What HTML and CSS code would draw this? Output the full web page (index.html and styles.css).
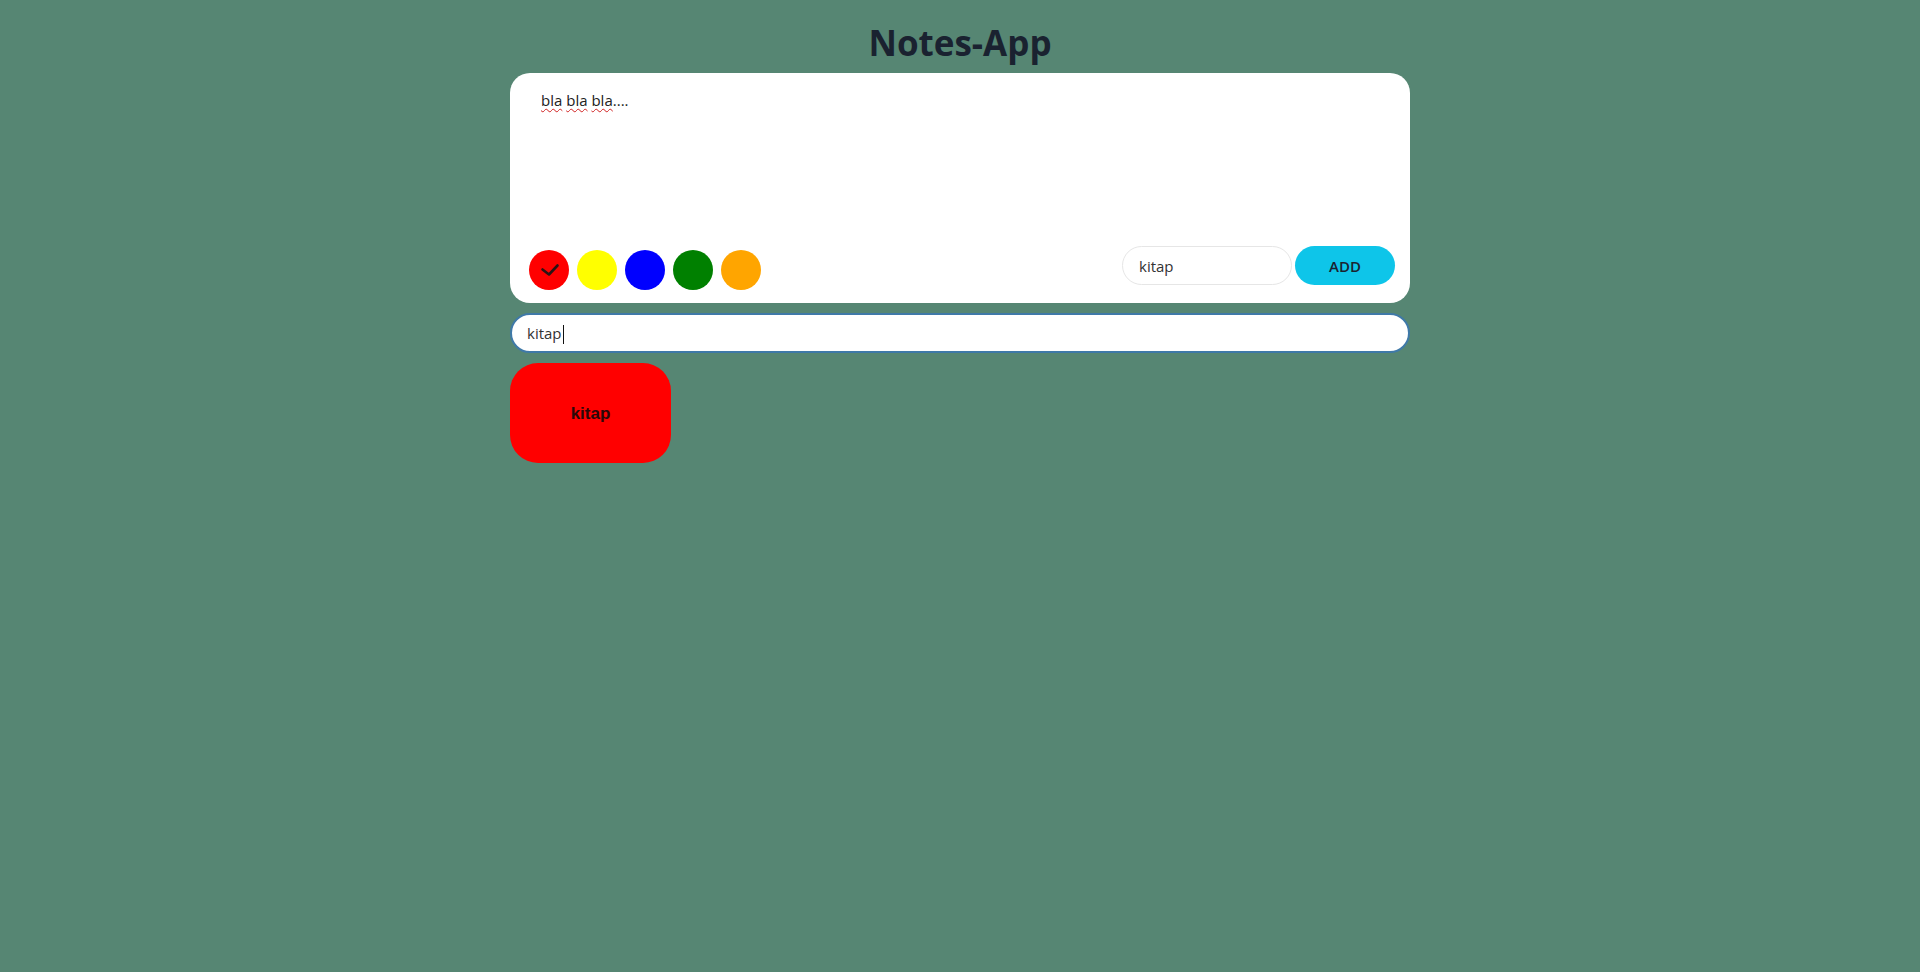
FILE: index.html
```html
<!DOCTYPE html>
<html lang="en">
<head>
<meta charset="utf-8">
<title>Notes-App</title>
<link rel="stylesheet" href="styles.css">
</head>
<body>
<div class="app">
  <h1 class="title">Notes-App</h1>
  <section class="editor">
    <div class="note-text"><span class="sp">bla</span> <span class="sp">bla</span> <span class="sp">bla</span>....</div>
    <div class="editor-bar">
      <div class="colors">
        <button class="swatch red" aria-label="red">
          <svg viewBox="0 0 40 40" width="40" height="40"><polyline points="13.5,19.5 20,24.5 28.5,15.5" fill="none" stroke="#2a1414" stroke-width="2.6" stroke-linecap="round" stroke-linejoin="round"/></svg>
        </button>
        <button class="swatch yellow" aria-label="yellow"></button>
        <button class="swatch blue" aria-label="blue"></button>
        <button class="swatch green" aria-label="green"></button>
        <button class="swatch orange" aria-label="orange"></button>
      </div>
      <div class="actions">
        <input class="title-input" type="text" value="kitap">
        <button class="add-btn">ADD</button>
      </div>
    </div>
  </section>
  <div class="search"><span class="search-text">kitap</span><span class="caret"></span></div>
  <div class="notes">
    <div class="note red">kitap</div>
  </div>
</div>
</body>
</html>
```
FILE: styles.css
```css
html, body {
  margin: 0;
  padding: 0;
  background: #568673;
  height: 100%;
}
body {
  font-family: "Open Sans", "Noto Sans", sans-serif;
}
.app {
  width: 900px;
  margin: 0 auto;
  padding-top: 21px;
}
.title {
  margin: 0 0 8px;
  text-align: center;
  font-size: 35px;
  line-height: 44px;
  font-weight: 700;
  color: #1a2230;
}
.editor {
  background: #fff;
  border-radius: 20px;
  padding: 10px 15px 13px 19px;
}
.note-text {
  height: 163px;
  box-sizing: border-box;
  padding: 8px 12px;
  font-size: 15px;
  line-height: 19px;
  color: #222;
}
.sp {
  text-decoration: underline wavy #d02020;
  text-decoration-thickness: 1px;
  text-underline-offset: 2px;
}
.editor-bar {
  display: flex;
  justify-content: space-between;
  align-items: flex-start;
  height: 44px;
}
.colors {
  display: flex;
  gap: 8px;
  margin-top: 4px;
}
.swatch {
  width: 40px;
  height: 40px;
  border-radius: 50%;
  border: none;
  padding: 0;
  display: flex;
  align-items: center;
  justify-content: center;
}
.swatch svg { display: block; }
.red { background: #ff0000; }
.yellow { background: #ffff00; }
.blue { background: #0000ff; }
.green { background: #008000; }
.orange { background: #ffa500; }
.actions {
  display: flex;
  gap: 3px;
}
.title-input {
  width: 170px;
  height: 39px;
  box-sizing: border-box;
  border: 1px solid #e6e6e6;
  border-radius: 20px;
  padding: 0 16px;
  font-family: "Open Sans", sans-serif;
  font-size: 15px;
  color: #333;
  outline: none;
}
.add-btn {
  width: 100px;
  height: 39px;
  border: none;
  border-radius: 20px;
  background: #0ec5e9;
  font-family: "Open Sans", sans-serif;
  font-size: 15px;
  font-weight: 600;
  color: #1a2230;
}
.search {
  margin-top: 10px;
  height: 40px;
  box-sizing: border-box;
  border: 2px solid #3f79a8;
  border-radius: 20px;
  background: #fff;
  padding: 0 15px;
  display: flex;
  align-items: center;
  font-size: 15px;
  color: #333;
}
.caret {
  display: inline-block;
  width: 1px;
  height: 19px;
  background: #111;
  margin-left: 1px;
  margin-top: 2px;
}
.notes {
  margin-top: 10px;
  display: flex;
  flex-wrap: wrap;
  gap: 10px;
}
.note {
  width: 161px;
  height: 100px;
  border-radius: 28px;
  display: flex;
  align-items: center;
  justify-content: center;
  font-family: "Liberation Sans", Arial, sans-serif;
  font-weight: 700;
  font-size: 17px;
  color: #2a0808;
  padding-top: 2px;
  box-sizing: border-box;
}
```
